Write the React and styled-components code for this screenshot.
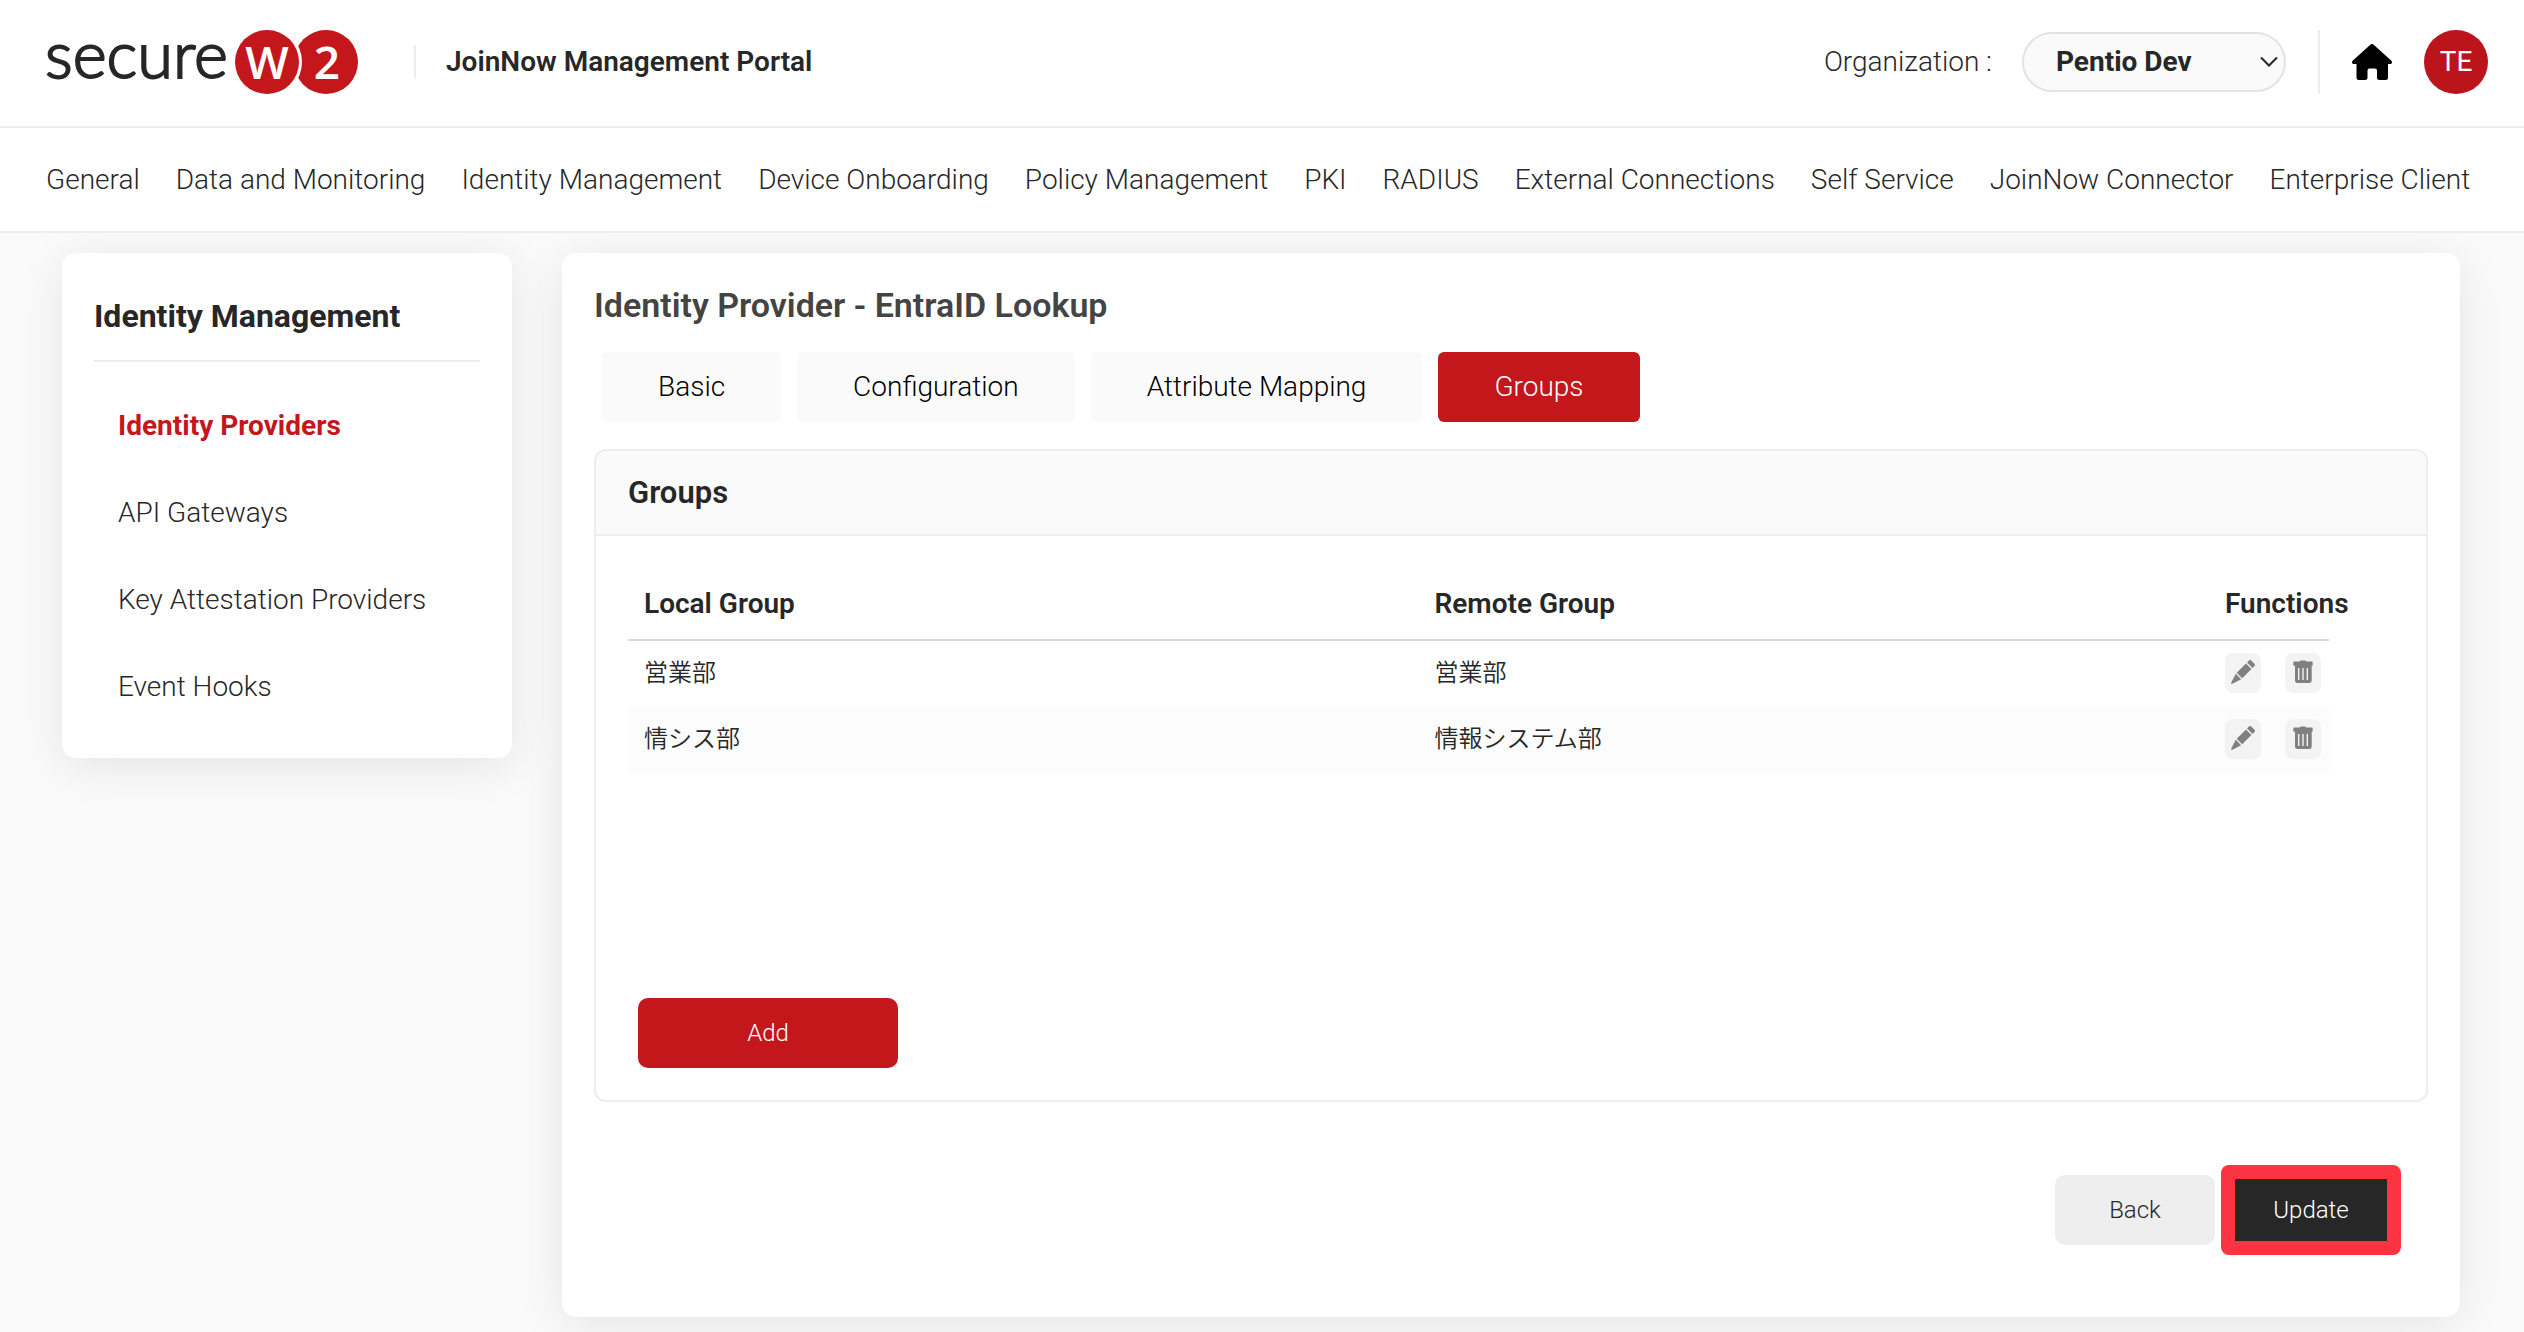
import React from "react";
import styled, { createGlobalStyle } from "styled-components";

const COLORS = {
  red: "#c3171c",
  dark: "#272727",
  line: "#ededed",
  soft: "#fafafa",
};

const GlobalStyle = createGlobalStyle`
  *, *::before, *::after {
    box-sizing: border-box;
  }

  body {
    margin: 0;
    background: #fafafa;
    color: ${COLORS.dark};
    font-family: Roboto, "Noto Sans CJK JP", sans-serif;
    font-size: 28px;
    font-weight: 300;
    line-height: 36px;
  }

  button, select {
    font: inherit;
    color: inherit;
    cursor: pointer;
  }

  a {
    color: inherit;
    text-decoration: none;
  }
`;

const Page = styled.div`
  display: flex;
  flex-direction: column;
  min-height: 100vh;
`;

const Header = styled.header`
  display: flex;
  align-items: center;
  justify-content: space-between;
  height: 128px;
  padding: 0 36px 2px 46px;
  background: #fff;
  border-bottom: 2px solid ${COLORS.line};
`;

const HeaderGroup = styled.div`
  display: flex;
  align-items: center;
`;

const Logo = styled.svg`
  display: block;
  width: 312px;
  height: 96px;
`;

const Divider = styled.span`
  width: 2px;
  height: ${({ $tall }) => ($tall ? "64px" : "34px")};
  margin: 0 32px;
  background: ${COLORS.line};
`;

const LogoDivider = styled(Divider)`
  margin: 0 30px 0 56px;
`;

const PortalName = styled.span`
  font-weight: 600;
`;

const OrgLabel = styled.label`
  margin-right: 30px;
`;

const SelectBox = styled.div`
  position: relative;

  svg {
    position: absolute;
    top: 24px;
    right: 8px;
    pointer-events: none;
  }
`;

const OrgSelect = styled.select`
  display: block;
  width: 264px;
  height: 60px;
  padding: 0 32px;
  border: 2px solid #e3e3e3;
  border-radius: 30px;
  background: ${COLORS.soft};
  font-weight: 700;
  appearance: none;
`;

const HomeLink = styled.a`
  display: block;
  margin-right: 32px;

  svg {
    display: block;
  }
`;

const Avatar = styled.button`
  width: 64px;
  height: 64px;
  padding: 0;
  border: 0;
  border-radius: 50%;
  background: #bb141a;
  color: #fff;
  font-weight: 400;
`;

const Nav = styled.nav`
  display: flex;
  align-items: center;
  gap: 36px;
  height: 105px;
  padding: 0 46px;
  background: #fff;
  border-bottom: 2px solid ${COLORS.line};
  white-space: nowrap;
`;

const Content = styled.div`
  display: flex;
  flex: 1;
  align-items: flex-start;
  gap: 50px;
  padding: 20px 64px 16px 62px;
  overflow: hidden;
`;

const Card = styled.div`
  padding: 32px;
  border-radius: 14px;
  background: #fff;
  box-shadow: 0 8px 48px rgba(0, 0, 0, 0.09);
`;

const Sidebar = styled(Card).attrs({ as: "aside" })`
  flex: 0 0 450px;
  padding-bottom: 28px;
`;

const SidebarTitle = styled.h2`
  margin: 0;
  padding: 11px 0 24px;
  border-bottom: 2px solid ${COLORS.line};
  font-size: 32px;
  font-weight: 700;
  line-height: 40px;
`;

const SidebarList = styled.ul`
  margin: 20px 0 0;
  padding: 0;
  list-style: none;
`;

const SidebarLink = styled.a`
  display: block;
  padding: 0 24px;
  line-height: 87px;
  ${({ $active }) => $active && `color: ${COLORS.red}; font-weight: 700;`}
`;

const Main = styled(Card).attrs({ as: "main" })`
  flex: 1;
  min-width: 0;
  padding-bottom: 62px;
`;

const Title = styled.h1`
  margin: 0 0 27px;
  color: #444;
  font-size: 34px;
  font-weight: 600;
  line-height: 40px;
`;

const Tabs = styled.div`
  display: flex;
  gap: 16px;
  margin: 0 8px 27px;
`;

const Tab = styled.button`
  height: 70px;
  padding: 0 56px;
  border: 0;
  border-radius: 6px;
  background: ${({ $active }) => ($active ? COLORS.red : COLORS.soft)};
  color: ${({ $active }) => ($active ? "#fff" : "#000")};
`;

const Panel = styled.section`
  border: 2px solid ${COLORS.line};
  border-radius: 12px;
  overflow: hidden;
`;

const PanelTitle = styled.h2`
  margin: 0;
  padding: 0 32px;
  border-bottom: 2px solid ${COLORS.line};
  background: ${COLORS.soft};
  font-size: 31px;
  font-weight: 600;
  line-height: 83px;
`;

const PanelBody = styled.div`
  padding: 32px;
`;

const TableArea = styled.div`
  min-height: 430px;
  padding-right: 65px;
`;

const Table = styled.table`
  width: 100%;
  border-collapse: separate;
  border-spacing: 0;
  table-layout: fixed;

  th,
  td {
    padding: 0 0 0 16px;
    text-align: left;
    white-space: nowrap;
  }

  th {
    height: 73px;
    border-bottom: 2px solid #dadada;
    font-weight: 600;
  }

  th:last-child {
    width: 120px;
  }

  td {
    height: 66px;
    padding-bottom: 2px;
    font-size: 24px;
    font-weight: 350;
  }

  tbody tr:nth-child(even) {
    background: #fcfcfc;
  }
`;

const RowActions = styled.div`
  display: flex;
  gap: 24px;
`;

const IconButton = styled.button`
  display: flex;
  align-items: center;
  justify-content: center;
  width: 36px;
  height: 40px;
  padding: 0 0 2px;
  border: 0;
  border-radius: 8px;
  background: #f3f3f3;
  color: #808080;
`;

const Button = styled.button`
  width: 160px;
  height: 70px;
  padding: 0;
  border: 0;
  border-radius: 10px;
  background: #eee;
  font-size: 24px;
`;

const AddButton = styled(Button)`
  width: 260px;
  margin-left: 10px;
  background: ${COLORS.red};
  color: #fff;
`;

const UpdateButton = styled(Button)`
  width: 180px;
  height: 90px;
  border: 14px solid #fc3441;
  border-radius: 8px;
  background: ${COLORS.dark};
  color: #fff;
`;

const Actions = styled.div`
  display: flex;
  align-items: center;
  justify-content: flex-end;
  gap: 6px;
  margin-top: 63px;
  padding-right: 27px;
`;

const LogoMark = () => (
  <Logo viewBox="0 -16 312 96" role="img" aria-label="SecureW2">
    <text
      x="-1"
      y="48"
      fontFamily="Lato"
      fontWeight="300"
      fontSize="65"
      fill={COLORS.dark}
      stroke={COLORS.dark}
      strokeWidth="2"
    >
      secure
    </text>
    <circle cx="280" cy="32" r="32" fill={COLORS.red} />
    <circle cx="221" cy="32" r="35" fill="#fff" />
    <circle cx="221" cy="32" r="32" fill={COLORS.red} />
    <g fontFamily="Open Sans" fontWeight="600" fontSize="46" fill="#fff" textAnchor="middle">
      <text x="221" y="49">W</text>
      <text x="281" y="49">2</text>
    </g>
  </Logo>
);

const ChevronIcon = () => (
  <svg width="18" height="12" viewBox="0 0 18 12" fill="none" stroke="#272727" strokeWidth="2">
    <path d="M1 1.5l8 8 8-8" />
  </svg>
);

const HomeIcon = () => (
  <svg width="40" height="36" viewBox="0 0 40 36">
    <path d="M18.6.6a2 2 0 0 1 2.8 0l18 16.2c1.2 1.2.4 3.2-1.2 3.2H36v13.5a2.5 2.5 0 0 1-2.5 2.5h-6a2.5 2.5 0 0 1-2.5-2.5v-7a2 2 0 0 0-2-2h-5.5a2 2 0 0 0-2 2v7a2.5 2.5 0 0 1-2.5 2.5H7a2.5 2.5 0 0 1-2.5-2.5V20H1.8C.2 20-.6 18 .6 16.8z" />
  </svg>
);

const PencilIcon = () => (
  <svg width="24" height="24" viewBox="0 0 24 24" fill="currentColor">
    <path d="M18 .5a1.6 1.6 0 0 1 2.2 0l3.300 3.300a1.600 1.600 0 0 1 0 2.200l-2 2-5.500-5.500zM15 3.500 20.500 9l-9.300 9.300-5.500-5.500zM4.800 13.800l5.400 5.400L1.400 23.800c-.8.400-1.600-.4-1.200-1.200z" />
  </svg>
);

const TrashIcon = () => (
  <svg width="20" height="24" viewBox="0 0 20 24" fill="currentColor">
    <path
      fillRule="evenodd"
      d="M7 1.5C7 .7 7.6.5 8.2.5h3.600c.6 0 1.200.2 1.200 1h5.500c.8 0 1.200.5 1.200 1.200v2c0 .7-.4 1.100-1 1.100v14.700c0 1.600-1 2.500-2.500 2.500H4.500C3 23 2 22.100 2 20.500V5.800c-1 0-1.700-.4-1.700-1.100v-2c0-.7.4-1.200 1.200-1.200zM5 8v12h1.400V8zm4.300 0v12h1.400V8zm4.300 0v12H15V8z"
    />
  </svg>
);

const NAV_ITEMS = [
  "General",
  "Data and Monitoring",
  "Identity Management",
  "Device Onboarding",
  "Policy Management",
  "PKI",
  "RADIUS",
  "External Connections",
  "Self Service",
  "JoinNow Connector",
  "Enterprise Client",
];

const SIDEBAR_ITEMS = [
  "Identity Providers",
  "API Gateways",
  "Key Attestation Providers",
  "Event Hooks",
];

const TABS = ["Basic", "Configuration", "Attribute Mapping", "Groups"];

const GROUPS = [
  { local: "営業部", remote: "営業部" },
  { local: "情シス部", remote: "情報システム部" },
];

const App = () => {
  return (
    <Page>
      <GlobalStyle />
      <Header>
        <HeaderGroup>
          <LogoMark />
          <LogoDivider />
          <PortalName>JoinNow Management Portal</PortalName>
        </HeaderGroup>
        <HeaderGroup>
          <OrgLabel htmlFor="organization">Organization :</OrgLabel>
          <SelectBox>
            <OrgSelect id="organization">
              <option>Pentio Dev</option>
            </OrgSelect>
            <ChevronIcon />
          </SelectBox>
          <Divider $tall />
          <HomeLink href="#home" aria-label="Home">
            <HomeIcon />
          </HomeLink>
          <Avatar type="button">TE</Avatar>
        </HeaderGroup>
      </Header>
      <Nav>
        {NAV_ITEMS.map((item) => (
          <a href="#nav" key={item}>
            {item}
          </a>
        ))}
      </Nav>
      <Content>
        <Sidebar>
          <SidebarTitle>Identity Management</SidebarTitle>
          <SidebarList>
            {SIDEBAR_ITEMS.map((item, i) => (
              <li key={item}>
                <SidebarLink href="#section" $active={i === 0}>
                  {item}
                </SidebarLink>
              </li>
            ))}
          </SidebarList>
        </Sidebar>
        <Main>
          <Title>Identity Provider - EntraID Lookup</Title>
          <Tabs role="tablist">
            {TABS.map((tab) => (
              <Tab
                type="button"
                role="tab"
                key={tab}
                aria-selected={tab === "Groups"}
                $active={tab === "Groups"}
              >
                {tab}
              </Tab>
            ))}
          </Tabs>
          <Panel>
            <PanelTitle>Groups</PanelTitle>
            <PanelBody>
              <TableArea>
                <Table>
                  <thead>
                    <tr>
                      <th>Local Group</th>
                      <th>Remote Group</th>
                      <th>Functions</th>
                    </tr>
                  </thead>
                  <tbody>
                    {GROUPS.map(({ local, remote }) => (
                      <tr key={local}>
                        <td>{local}</td>
                        <td>{remote}</td>
                        <td>
                          <RowActions>
                            <IconButton type="button" aria-label="Edit">
                              <PencilIcon />
                            </IconButton>
                            <IconButton type="button" aria-label="Delete">
                              <TrashIcon />
                            </IconButton>
                          </RowActions>
                        </td>
                      </tr>
                    ))}
                  </tbody>
                </Table>
              </TableArea>
              <AddButton type="button">Add</AddButton>
            </PanelBody>
          </Panel>
          <Actions>
            <Button type="button">Back</Button>
            <UpdateButton type="button">Update</UpdateButton>
          </Actions>
        </Main>
      </Content>
    </Page>
  );
};

export default App;
